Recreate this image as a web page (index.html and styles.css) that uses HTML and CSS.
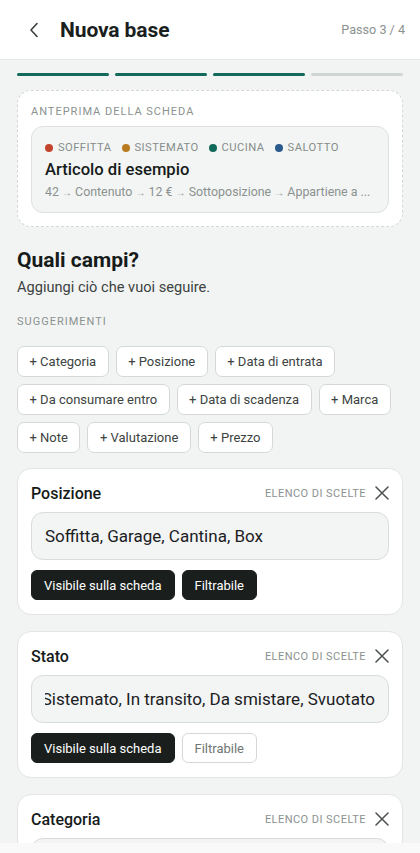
FILE: index.html
```html
<!DOCTYPE html>
<html lang="it">
<head>
<meta charset="utf-8">
<title>Nuova base</title>
<link rel="stylesheet" href="styles.css">
</head>
<body>
<header class="topbar">
  <button class="back" aria-label="Indietro">
    <svg width="10" height="16" viewBox="0 0 10 16"><path d="M8 1.5 L2 8 L8 14.5" fill="none" stroke="#3a403e" stroke-width="1.6" stroke-linecap="round" stroke-linejoin="round"/></svg>
  </button>
  <h1 class="title">Nuova base</h1>
  <span class="step">Passo 3 / 4</span>
</header>
<main class="content">
  <div class="progress">
    <span class="seg on"></span><span class="seg on"></span><span class="seg on"></span><span class="seg"></span>
  </div>

  <section class="preview">
    <div class="label">ANTEPRIMA DELLA SCHEDA</div>
    <div class="pcard">
      <div class="tags">
        <span class="tag"><i class="dot red"></i>SOFFITTA</span>
        <span class="tag"><i class="dot amber"></i>SISTEMATO</span>
        <span class="tag"><i class="dot green"></i>CUCINA</span>
        <span class="tag"><i class="dot blue"></i>SALOTTO</span>
      </div>
      <div class="ptitle">Articolo di esempio</div>
      <div class="pmeta">42 <span class="ar">→</span> Contenuto <span class="ar">→</span> 12 € <span class="ar">→</span> Sottoposizione <span class="ar">→</span> Appartiene a ...</div>
    </div>
  </section>

  <h2 class="h2">Quali campi?</h2>
  <p class="sub">Aggiungi ciò che vuoi seguire.</p>
  <div class="label sug">SUGGERIMENTI</div>
  <div class="chips">
    <span class="chip">+ Categoria</span>
    <span class="chip">+ Posizione</span>
    <span class="chip">+ Data di entrata</span>
    <span class="chip">+ Da consumare entro</span>
    <span class="chip">+ Data di scadenza</span>
    <span class="chip">+ Marca</span>
    <span class="chip">+ Note</span>
    <span class="chip">+ Valutazione</span>
    <span class="chip">+ Prezzo</span>
  </div>

  <section class="field">
    <div class="fhead">
      <span class="fname">Posizione</span>
      <span class="ftype">ELENCO DI SCELTE</span>
      <svg class="x" width="14" height="14" viewBox="0 0 14 14"><path d="M1 1 L13 13 M13 1 L1 13" stroke="#4a504e" stroke-width="1.5" stroke-linecap="round"/></svg>
    </div>
    <div class="input"><div class="clip"><span>Soffitta, Garage, Cantina, Box</span></div></div>
    <div class="toggles">
      <span class="tog on">Visibile sulla scheda</span>
      <span class="tog on">Filtrabile</span>
    </div>
  </section>

  <section class="field">
    <div class="fhead">
      <span class="fname">Stato</span>
      <span class="ftype">ELENCO DI SCELTE</span>
      <svg class="x" width="14" height="14" viewBox="0 0 14 14"><path d="M1 1 L13 13 M13 1 L1 13" stroke="#4a504e" stroke-width="1.5" stroke-linecap="round"/></svg>
    </div>
    <div class="input"><div class="clip end"><span>In uso, Sistemato, In transito, Da smistare, Svuotato</span></div></div>
    <div class="toggles">
      <span class="tog on">Visibile sulla scheda</span>
      <span class="tog">Filtrabile</span>
    </div>
  </section>

  <section class="field">
    <div class="fhead">
      <span class="fname">Categoria</span>
      <span class="ftype">ELENCO DI SCELTE</span>
      <svg class="x" width="14" height="14" viewBox="0 0 14 14"><path d="M1 1 L13 13 M13 1 L1 13" stroke="#4a504e" stroke-width="1.5" stroke-linecap="round"/></svg>
    </div>
    <div class="input"><div class="clip"><span>Utensili, Decorazioni, Libri</span></div></div>
    <div class="toggles">
      <span class="tog on">Visibile sulla scheda</span>
      <span class="tog">Filtrabile</span>
    </div>
  </section>
</main>
<div class="bottomfade"></div>
</body>
</html>
```

FILE: styles.css
```css
* { box-sizing: border-box; }
html, body { margin: 0; padding: 0; }
body {
  background: #f2f4f3;
  font-family: Roboto, "Noto Sans", "Liberation Sans", sans-serif;
  color: #1b201f;
  width: 420px;
}
.topbar {
  height: 60px;
  background: #fff;
  border-bottom: 1px solid #e4e7e6;
  display: flex;
  align-items: center;
  padding: 0 15px 0 24px;
}
.back {
  width: 20px; height: 28px;
  border: 0; background: none; padding: 0;
  display: flex; align-items: center; justify-content: center;
  margin-right: 16px;
}
.title {
  margin: 0;
  font-size: 21px;
  font-weight: 700;
  letter-spacing: -0.1px;
  color: #1a1f1e;
  flex: 1;
}
.step {
  font-size: 12.6px;
  color: #8b928f;
}
.content { padding: 0 17px; }
.progress {
  display: flex;
  gap: 6px;
  margin-top: 13px;
}
.seg {
  flex: 1;
  height: 3px;
  border-radius: 2px;
  background: #d0d6d3;
}
.seg.on { background: #136a5a; }

.preview {
  margin-top: 14px;
  background: #fff;
  border: 1.5px dashed #d3d8d6;
  border-radius: 14px;
  padding: 14px 13px 13px;
}
.label {
  font-size: 11px;
  letter-spacing: 1px;
  color: #8b928f;
  line-height: 14px;
}
.pcard {
  margin-top: 7px;
  background: #f3f5f4;
  border: 1px solid #dde1df;
  border-radius: 12px;
  padding: 13px 13px 10px;
}
.tags { display: flex; gap: 10px; line-height: 16px; }
.tag {
  display: flex; align-items: center; gap: 5px;
  font-size: 11.2px; letter-spacing: 0.45px; color: #868d8a;
}
.dot { width: 8px; height: 8px; border-radius: 50%; display: inline-block; }
.dot.red { background: #c2442d; }
.dot.amber { background: #b87c1e; }
.dot.green { background: #116a59; }
.dot.blue { background: #2b5a8d; }
.ptitle {
  margin-top: 3px;
  font-size: 16.6px;
  font-weight: 500;
  line-height: 22px;
  color: #161b1a;
}
.pmeta {
  margin-top: 2px;
  font-size: 12.4px;
  line-height: 18px;
  color: #8b928f;
  white-space: nowrap;
  overflow: hidden;
}
.ar { font-size: 10px; }

.h2 {
  margin: 19px 0 0;
  font-size: 21px;
  font-weight: 700;
  line-height: 28px;
  color: #161b1a;
}
.sub {
  margin: 3px 0 0;
  font-size: 14.6px;
  line-height: 20px;
  color: #3c4341;
}
.label.sug { margin-top: 18px; }
.chips {
  display: flex;
  flex-wrap: wrap;
  gap: 7px 7px;
  margin-top: 17px;
}
.chip {
  height: 31px;
  padding: 0 11.5px;
  display: inline-flex;
  align-items: center;
  background: #fff;
  border: 1px solid #d4d9d7;
  border-radius: 7px;
  font-size: 13px;
  letter-spacing: 0;
  color: #3c4341;
}

.field {
  margin-top: 15px;
  background: #fff;
  border: 1px solid #e2e5e4;
  border-radius: 14px;
  padding: 13px 13px 14px;
}
.field + .field { margin-top: 16px; }
.fhead {
  display: flex;
  align-items: center;
  height: 22px;
}
.fname {
  flex: 1;
  font-size: 16px;
  font-weight: 500;
  color: #161b1a;
}
.ftype {
  font-size: 11px;
  letter-spacing: 0.45px;
  color: #8b928f;
  margin-right: 9px;
}
.input {
  margin-top: 8px;
  height: 48px;
  background: #f3f5f4;
  border: 1px solid #d8dcdb;
  border-radius: 12px;
  padding: 0 13px;
  display: flex;
  align-items: center;
  font-size: 17px;
  color: #1b201f;
}
.clip {
  flex: 1;
  display: flex;
  overflow: hidden;
  white-space: nowrap;
}
.clip span { flex-shrink: 0; }
.clip.end { justify-content: flex-end; }
.toggles {
  display: flex;
  gap: 7px;
  margin-top: 10px;
}
.tog {
  height: 30px;
  padding: 0 12px;
  display: inline-flex;
  align-items: center;
  border-radius: 6px;
  font-size: 13px;
  letter-spacing: 0;
  background: #fff;
  border: 1px solid #d4d9d7;
  color: #6f7673;
}
.tog.on {
  background: #1a1f1e;
  border-color: #1a1f1e;
  color: #fff;
}
.bottomfade {
  position: fixed;
  left: 0; right: 0; bottom: 0;
  height: 10px;
  background: #f8f9f8;
}
```
